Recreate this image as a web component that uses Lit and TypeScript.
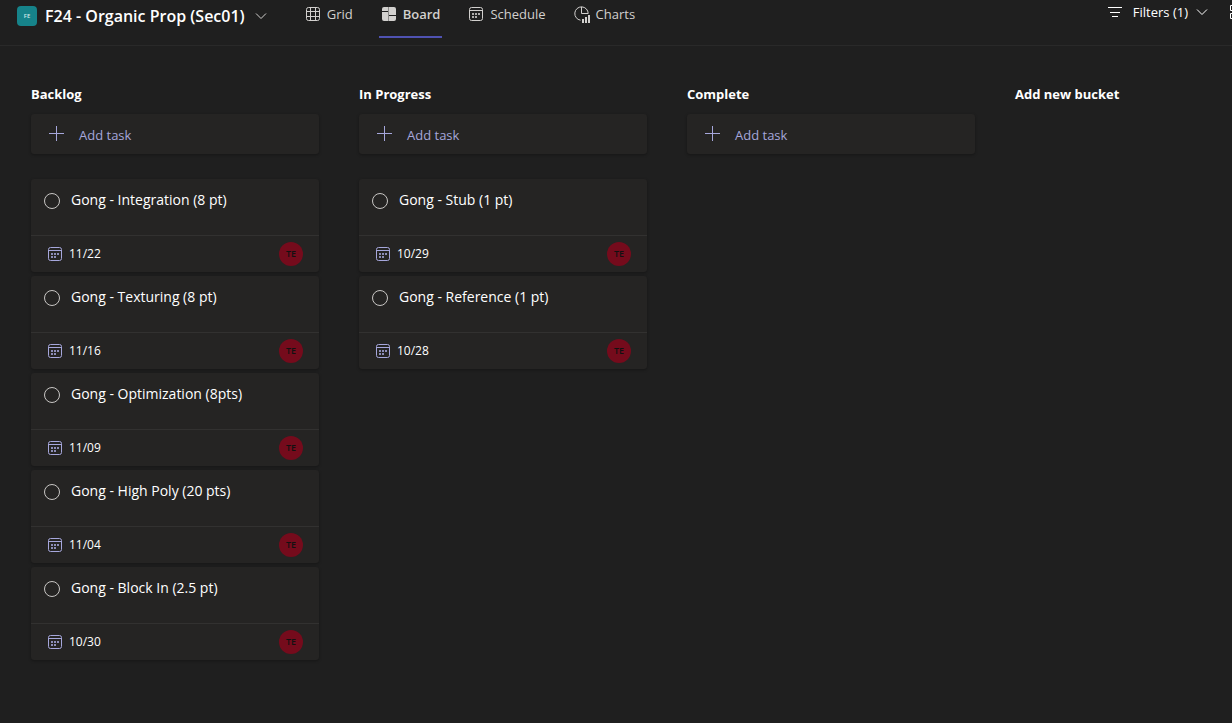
import { LitElement, html, svg, css } from "lit";
import { customElement, property } from "lit/decorators.js";

interface Task {
  title: string;
  due: string;
}

interface Bucket {
  name: string;
  tasks: Task[];
}

const buckets: Bucket[] = [
  {
    name: "Backlog",
    tasks: [
      { title: "Gong - Integration (8 pt)", due: "11/22" },
      { title: "Gong - Texturing (8 pt)", due: "11/16" },
      { title: "Gong - Optimization (8pts)", due: "11/09" },
      { title: "Gong - High Poly (20 pts)", due: "11/04" },
      { title: "Gong - Block In (2.5 pt)", due: "10/30" },
    ],
  },
  {
    name: "In Progress",
    tasks: [
      { title: "Gong - Stub (1 pt)", due: "10/29" },
      { title: "Gong - Reference (1 pt)", due: "10/28" },
    ],
  },
  { name: "Complete", tasks: [] },
];

const shapes = {
  grid: svg`<rect x="1.5" y="1.5" width="13" height="13" rx="2"/><path d="M1.5 5.5h13M1.5 10.5h13M5.5 1.5v13M10.5 1.5v13"/>`,
  board: svg`<g fill="currentColor" stroke="none"><path d="M3 1h4v4H1V3a2 2 0 0 1 2-2zM1 6h6v9H3a2 2 0 0 1-2-2z"/><path d="M8 1h5a2 2 0 0 1 2 2v6H8zM8 10h7v3a2 2 0 0 1-2 2H8z"/><path d="M7 1h1v14H7z" opacity=".6"/></g>`,
  calendar: svg`<rect x="1.5" y="1.5" width="13" height="13" rx="2"/><path d="M1.5 4.5h13"/><path stroke="none" fill="currentColor" d="M7 7h2v2H7zM10 7h2v2h-2zM4 7h2v2H4zM4 10h2v2H4zM7 10h2v2H7z" opacity=".8"/>`,
  charts: svg`<path d="M6.5 14.2A6.7 6.7 0 1 1 14.2 7.5H7.5V.8"/><path stroke="none" fill="currentColor" d="M8 13h2v4H8zM11 11h2v6h-2zM14 9h2v8h-2z"/>`,
  filter: svg`<path d="M1 3.5h14M3 8.5h10M5 12.5h6"/>`,
  chevron: svg`<path d="M3 5.5l5 5 5-5"/>`,
  plus: svg`<path d="M8.5 0v15M1 7.5h15"/>`,
  tiles: svg`<path d="M.5.5h5v5h-5zM8.5.5h5v5h-5zM.5 8.5h5v5h-5zM8.5 8.5h5v5h-5z"/>`,
};

type IconName = keyof typeof shapes;

const icon = (name: IconName, size = 16) => html`<svg
  class="icon"
  width=${size}
  height=${size}
  viewBox="0 0 ${size} ${size}"
  fill="none"
  stroke="currentColor"
  aria-hidden="true"
>${shapes[name]}</svg>`;

const shared = css`
  :host {
    display: block;
    box-sizing: border-box;
  }
  *, *::before, *::after {
    box-sizing: border-box;
  }
  button {
    font: inherit;
    color: inherit;
    background: none;
    border: 0;
    padding: 0;
    margin: 0;
    text-align: left;
    cursor: pointer;
  }
  .icon {
    display: block;
    flex: none;
    overflow: visible;
  }
`;

@customElement("task-card")
class TaskCard extends LitElement {
  @property({ attribute: false }) task!: Task;

  static styles = [
    shared,
    css`
      :host {
        background: #252423;
        border-radius: 3px;
        box-shadow: 0 1px 3px rgba(0, 0, 0, 0.3);
        color: #fff;
      }
      .top {
        display: flex;
        align-items: flex-start;
        gap: 11px;
        min-height: 56px;
        padding: 11px 13px;
        font-size: 14px;
        line-height: 20px;
      }
      .check {
        appearance: none;
        flex: none;
        width: 16px;
        height: 16px;
        margin: 3px 0 0;
        border: 1px solid #c8c6c4;
        border-radius: 50%;
      }
      .foot {
        display: flex;
        align-items: center;
        justify-content: space-between;
        border-top: 1px solid #323130;
        height: 37px;
        padding: 0 16px;
      }
      .due {
        display: flex;
        align-items: center;
        gap: 6px;
        font-size: 12px;
      }
      .due .icon {
        color: #a6a7dc;
      }
      .avatar {
        width: 24px;
        height: 24px;
        border-radius: 50%;
        background: #750b1c;
        color: #111;
        font-size: 9px;
        font-weight: 600;
        line-height: 24px;
        text-align: center;
      }
    `,
  ];

  render() {
    return html`
      <label class="top">
        <input class="check" type="checkbox" />
        <span>${this.task.title}</span>
      </label>
      <div class="foot">
        <button class="due">${icon("calendar")}${this.task.due}</button>
        <span class="avatar">TE</span>
      </div>
    `;
  }
}

@customElement("task-bucket")
class TaskBucket extends LitElement {
  @property({ attribute: false }) bucket!: Bucket;

  static styles = [
    shared,
    css`
      h2 {
        margin: 0 0 10px;
        font-size: 13px;
        font-weight: 700;
        line-height: 20px;
        color: #fff;
      }
      .add {
        display: flex;
        align-items: center;
        gap: 14px;
        width: 100%;
        height: 40px;
        padding: 1px 17px 0;
        background: #252423;
        border-radius: 3px;
        box-shadow: 0 1px 3px rgba(0, 0, 0, 0.3);
        color: #a6a7dc;
      }
      .list {
        display: flex;
        flex-direction: column;
        gap: 4px;
        margin-top: 25px;
      }
    `,
  ];

  render() {
    return html`
      <h2>${this.bucket.name}</h2>
      <button class="add">${icon("plus", 17)}<span>Add task</span></button>
      <div class="list">
        ${this.bucket.tasks.map((t) => html`<task-card .task=${t}></task-card>`)}
      </div>
    `;
  }
}

@customElement("app-root")
class AppRoot extends LitElement {
  static styles = [
    shared,
    css`
      :host {
        min-height: 100vh;
        background: #1f1f1f;
        color: #fff;
        font-family: "Segoe UI", "Open Sans", "Noto Sans", sans-serif;
        font-size: 13px;
        line-height: 20px;
      }
      header {
        display: flex;
        align-items: flex-start;
        height: 46px;
        padding-left: 17px;
        border-bottom: 1px solid #292929;
        overflow: hidden;
      }
      .plan {
        display: flex;
        align-items: center;
        gap: 8px;
        height: 32px;
      }
      .logo {
        width: 20px;
        height: 20px;
        border-radius: 4px;
        background: #16838a;
        color: #cfe8e9;
        font-size: 6px;
        font-weight: 600;
        text-align: center;
      }
      h1 {
        margin: 0;
        font-size: 16px;
        font-weight: 600;
      }
      .muted {
        color: #d2d0ce;
      }
      nav {
        display: flex;
        gap: 24px;
        margin-left: 34px;
      }
      .tab {
        display: flex;
        align-items: center;
        gap: 6px;
        height: 38px;
        padding: 0 2px 8px;
        border-bottom: 2px solid transparent;
        color: #d2d0ce;
      }
      .tab.active {
        border-color: #4f52b2;
        font-weight: 600;
      }
      .actions {
        display: flex;
        align-items: center;
        height: 23px;
        margin-left: auto;
        margin-right: -12px;
        gap: 20px;
      }
      .filters {
        display: flex;
        align-items: center;
        gap: 6px;
      }
      .filters span {
        margin-left: 4px;
      }
      main {
        display: grid;
        grid-template-columns: repeat(4, 288px);
        gap: 40px;
        padding: 38px 0 40px 31px;
        overflow: hidden;
      }
      .new {
        align-self: start;
        font-weight: 700;
      }
    `,
  ];

  private tabs: { label: string; icon: IconName }[] = [
    { label: "Grid", icon: "grid" },
    { label: "Board", icon: "board" },
    { label: "Schedule", icon: "calendar" },
    { label: "Charts", icon: "charts" },
  ];

  render() {
    return html`
      <header>
        <button class="plan">
          <span class="logo">FE</span>
          <h1>F24 - Organic Prop (Sec01)</h1>
          <span class="muted">${icon("chevron")}</span>
        </button>
        <nav>
          ${this.tabs.map(
            (t) => html`<button class="tab ${t.label === "Board" ? "active" : ""}">
              ${icon(t.icon)}<span>${t.label}</span>
            </button>`
          )}
        </nav>
        <div class="actions">
          <button class="filters">
            ${icon("filter")}<span>Filters (1)</span>${icon("chevron")}
          </button>
          <button aria-label="Group by">${icon("tiles", 14)}</button>
        </div>
      </header>
      <main>
        ${buckets.map((b) => html`<task-bucket .bucket=${b}></task-bucket>`)}
        <button class="new">Add new bucket</button>
      </main>
    `;
  }
}
